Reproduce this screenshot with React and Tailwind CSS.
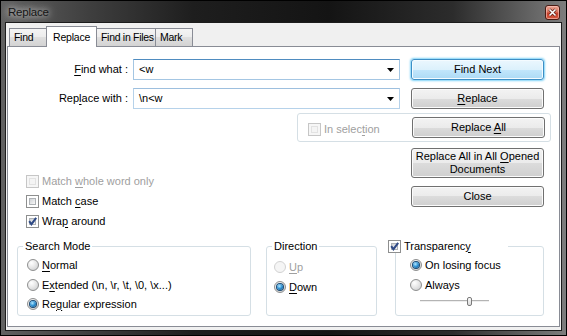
import React from "react";

function U({ children }) {
  return <span className="underline underline-offset-[2px] decoration-1">{children}</span>;
}

function Checkbox({ checked = false, disabled = false }) {
  return (
    <div
      className={
        disabled
          ? "relative w-[13px] h-[13px] shrink-0 border border-[#c6c6c6] bg-[#f6f6f6] p-[2px]"
          : "relative w-[13px] h-[13px] shrink-0 border border-[#8e8f8f] bg-white p-[2px]"
      }
    >
      <div
        className={
          disabled
            ? "w-full h-full border border-[#e2e2e2] bg-[#f4f4f4]"
            : "w-full h-full border border-[#aeb2b6] bg-[linear-gradient(135deg,#cfd2d5,#f8f8f8)]"
        }
      />
      {checked && (
        <svg className="absolute left-0 top-0" width="11" height="11" viewBox="0 0 11 11">
          <polyline points="2.2,5.2 4.4,8.2 9.2,1.8" fill="none" stroke="#2f4a86" strokeWidth="2" />
        </svg>
      )}
    </div>
  );
}

function Radio({ checked = false, disabled = false }) {
  return (
    <div
      className={
        disabled
          ? "w-[12px] h-[12px] rounded-full shrink-0 border border-[#d2d2d2] bg-[#f5f5f5] flex items-center justify-center"
          : "w-[12px] h-[12px] rounded-full shrink-0 border border-[#8e8f8f] bg-[radial-gradient(circle_at_35%_30%,#ffffff,#e8e8e8_45%,#c6c8ca)] flex items-center justify-center"
      }
    >
      {checked && (
        <div className="w-[6px] h-[6px] rounded-full bg-[radial-gradient(circle_at_40%_35%,#b4e8ff,#2b8fd2_50%,#0a477c)] shadow-[0_0_0_1px_#1b4a73]" />
      )}
    </div>
  );
}

function Btn({ children, def = false, tall = false }) {
  const base = "w-[133px] rounded-[3px] border flex items-center justify-center text-center text-[11px] leading-[13px] text-black shrink-0";
  if (def) {
    return (
      <div className={base + " h-[21px] border-[#3c8fc6] bg-[linear-gradient(#ebf7fe,#dcf1fc_50%,#c3e7fc_50%,#acdaf5)] shadow-[inset_0_0_0_1px_#f4fbff,0_0_2px_1px_#7fd2f7]"}>
        <span>{children}</span>
      </div>
    );
  }
  return (
    <div className={base + (tall ? " h-[30px]" : " h-[21px]") + " border-[#707070] bg-[linear-gradient(#f3f3f3,#ebebeb_50%,#dcdcdc_50%,#cfcfcf)] shadow-[inset_0_0_0_1px_#fbfbfb]"}>
      <span>{children}</span>
    </div>
  );
}

function Combo({ text, focused = false }) {
  return (
    <div
      className={
        focused
          ? "w-[267px] h-[21px] border border-[#a4c6e3] border-t-[#4f8cc0] bg-white flex items-center pl-[5px] pr-[5px] shrink-0"
          : "w-[267px] h-[21px] border border-[#b6d2ea] border-t-[#9dbfde] bg-white flex items-center pl-[5px] pr-[5px] shrink-0"
      }
    >
      <span className="flex-1">{text}</span>
      <svg width="7" height="4" viewBox="0 0 7 4">
        <polygon points="0,0 7,0 3.5,4" fill="#000" />
      </svg>
    </div>
  );
}

function CheckRow({ checked, disabled, children }) {
  return (
    <div className="h-[20px] flex items-center">
      <Checkbox checked={checked} disabled={disabled} />
      <span className={disabled ? "ml-[3px] text-[#a0a0a0]" : "ml-[3px]"}>{children}</span>
    </div>
  );
}

function RadioRow({ checked, disabled, children, h = "h-[20px]" }) {
  return (
    <div className={h + " flex items-center"}>
      <Radio checked={checked} disabled={disabled} />
      <span className={disabled ? "ml-[3px] text-[#a0a0a0]" : "ml-[3px]"}>{children}</span>
    </div>
  );
}

function Tab({ children, selected = false, w, first = false }) {
  if (selected) {
    return (
      <div className={w + " -ml-px h-[21px] -mb-px relative z-10 bg-white border border-b-0 border-[#898c95] flex items-center pl-[6px] whitespace-nowrap text-[10.5px] tracking-[-0.2px]"}>
        {children}
      </div>
    );
  }
  return (
    <div className={w + (first ? "" : " -ml-px") + " h-[18px] border border-b-0 border-[#898c95] bg-[linear-gradient(#f4f4f4,#ececec_50%,#dfdfdf_50%,#d3d3d3)] flex items-center pl-[4px] whitespace-nowrap overflow-hidden text-[10.5px] tracking-[-0.3px]"}>
      {children}
    </div>
  );
}

export default function App() {
  return (
    <div className="w-[567px] h-[336px] bg-black p-px font-['Liberation_Sans',Arial,sans-serif] text-[11px] leading-none text-black select-none">
      <div className="w-full h-full flex flex-col px-[4px] pb-[4px] bg-[linear-gradient(to_right,#616161,#3e3e3e_16%,#1e1e1e_34%,#141414_58%,#2c2c2c_80%,#7d7d7d)]">
        {/* title bar */}
        <div className="h-[21px] shrink-0 flex items-start justify-between">
          <span className="mt-[6px] ml-[3px] text-[11.5px] leading-none text-[#151515] tracking-[-0.2px] [text-shadow:0_0_6px_rgba(255,255,255,0.85),0_0_12px_rgba(255,255,255,0.6)]">
            Replace
          </span>
          <div className="mt-[4px] mr-[2px] w-[15px] h-[15px] rounded-[3px] border border-[#4a1c14] bg-[linear-gradient(#eba595,#d9745f_45%,#c7402c_55%,#d2583f)] shadow-[inset_0_0_0_1px_rgba(255,200,190,0.6)] flex items-center justify-center">
            <svg width="9" height="9" viewBox="0 0 9 9">
              <path d="M1.5 1.5 L7.5 7.5 M7.5 1.5 L1.5 7.5" stroke="#5a1e14" strokeWidth="3" />
              <path d="M1.5 1.5 L7.5 7.5 M7.5 1.5 L1.5 7.5" stroke="#ffffff" strokeWidth="1.6" />
            </svg>
          </div>
        </div>

        {/* client area */}
        <div className="flex-1 min-h-0 border border-[#1c1c1c] bg-[#f0f0f0] pt-[3px] px-px pb-[3px] flex flex-col">
          {/* tabs */}
          <div className="h-[20px] shrink-0 flex items-end pl-[2px]">
            <Tab w="w-[38px]" first>Find</Tab>
            <Tab w="w-[51px]" selected>Replace</Tab>
            <Tab w="w-[60px]">Find in Files</Tab>
            <Tab w="w-[38px]">Mark</Tab>
          </div>

          {/* panel */}
          <div className="flex-1 min-h-0 bg-white border border-[#898c95] flex flex-col pt-[12px]">
            {/* Find what */}
            <div className="flex items-center">
              <div className="w-[125px] pr-[5px] text-right">
                <U>F</U>ind what :
              </div>
              <Combo text="<w" focused />
              <div className="ml-[11px]">
                <Btn def>Find Next</Btn>
              </div>
            </div>

            {/* Replace with */}
            <div className="flex items-center mt-[8px]">
              <div className="w-[125px] pr-[5px] text-right">
                Rep<U>l</U>ace with :
              </div>
              <Combo text={"\\n<w"} />
              <div className="ml-[11px]">
                <Btn>
                  <U>R</U>eplace
                </Btn>
              </div>
            </div>

            {/* In selection group */}
            <div className="ml-[289px] mt-[4px] w-[254px] h-[29px] border border-[#d5dfe5] rounded-[3px] flex items-center">
              <div className="ml-[10px] mt-[3px] flex items-center">
                <Checkbox disabled />
                <span className="ml-[3px] text-[#a0a0a0]">
                  In selec<U>t</U>ion
                </span>
              </div>
              <div className="ml-auto mr-[5px] mt-[-1px]">
                <Btn>
                  Replace <U>A</U>ll
                </Btn>
              </div>
            </div>

            {/* options + side buttons */}
            <div className="flex items-start">
              <div className="w-[403px] pl-[18px] pt-[29px] flex flex-col">
                <CheckRow disabled>
                  Match <U>w</U>hole word only
                </CheckRow>
                <CheckRow>
                  Match <U>c</U>ase
                </CheckRow>
                <CheckRow checked>
                  Wra<U>p</U> around
                </CheckRow>
              </div>
              <div className="pt-[6px] flex flex-col gap-[8px]">
                <Btn tall>
                  Replace All in All <U>O</U>pened
                  <br />
                  Documents
                </Btn>
                <Btn>Close</Btn>
              </div>
            </div>

            {/* group boxes */}
            <div className="flex items-start mt-[8px]">
              <fieldset className="ml-[9px] w-[234px] h-[77px] border border-[#d5dfe5] rounded-[3px]">
                <legend className="ml-[5px] px-[2px] leading-[14px]">Search Mode</legend>
                <div className="pl-[9px] pt-[2px] flex flex-col">
                  <RadioRow>
                    <U>N</U>ormal
                  </RadioRow>
                  <RadioRow>
                    E<U>x</U>tended (\n, \r, \t, \0, \x...)
                  </RadioRow>
                  <RadioRow checked h="h-[18px]">
                    Re<U>g</U>ular expression
                  </RadioRow>
                </div>
              </fieldset>

              <fieldset className="ml-[15px] w-[111px] h-[77px] border border-[#d5dfe5] rounded-[3px]">
                <legend className="ml-[5px] px-[2px] leading-[14px]">Direction</legend>
                <div className="pl-[7px] pt-[4px] flex flex-col">
                  <RadioRow disabled>
                    <U>U</U>p
                  </RadioRow>
                  <RadioRow checked>
                    <U>D</U>own
                  </RadioRow>
                </div>
              </fieldset>

              <fieldset className="ml-[18px] w-[149px] h-[77px] border border-[#d5dfe5] rounded-[3px]">
                <legend className="-ml-[8px] w-[120px] h-[14px] flex items-center">
                  <Checkbox checked />
                  <span className="ml-[3px]">
                    Transparenc<U>y</U>
                  </span>
                </legend>
                <div className="pl-[14px] pt-[2px] flex flex-col">
                  <RadioRow checked>On losing focus</RadioRow>
                  <RadioRow>Always</RadioRow>
                  <div className="h-[12px] ml-[10px] w-[69px] relative flex items-center">
                    <div className="w-full h-[2px] border-t border-[#b4b4b4] bg-[#eeeeee]" />
                    <div className="absolute left-[47px] top-[2px] w-[5px] h-[9px] rounded-[2px] border border-[#7a7a7a] bg-[linear-gradient(#fafafa,#dcdcdc)]" />
                  </div>
                </div>
              </fieldset>
            </div>
          </div>
        </div>
      </div>
    </div>
  );
}
